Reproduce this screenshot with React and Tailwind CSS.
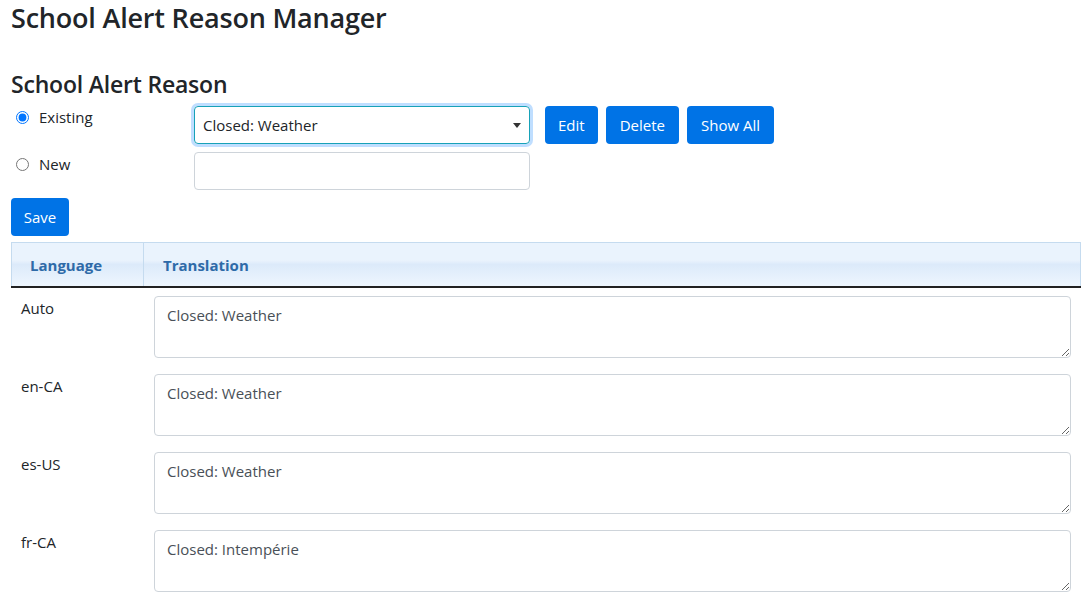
import { useState } from "react";

const rows = [
  { lang: "Auto", text: "Closed: Weather" },
  { lang: "en-CA", text: "Closed: Weather" },
  { lang: "es-US", text: "Closed: Weather" },
  { lang: "fr-CA", text: "Closed: Intempérie" },
];

export default function App() {
  const [mode, setMode] = useState("existing");

  return (
    <div className="px-[11px] pt-[2px] font-['Open_Sans',sans-serif] text-[#212529] text-[15px]">
      <h1 className="text-[27px] leading-[32px] font-semibold tracking-[-0.2px]">School Alert Reason Manager</h1>

      <h2 className="mt-[36px] text-[23px] leading-[28px] font-semibold tracking-[-0.2px]">School Alert Reason</h2>

      <div className="mt-[8px] flex items-start">
        <label className="w-[183px] flex items-center gap-[10px] pl-[5px] text-[#212529]">
          <input
            type="radio"
            name="mode"
            checked={mode === "existing"}
            onChange={() => setMode("existing")}
            className="w-[13px] h-[13px] accent-[#0075ff] m-0"
          />
          Existing
        </label>
        <div className="relative w-[336px] h-[38px] border border-[#17a2b8] rounded-[4px] shadow-[0_0_0_3px_rgba(0,123,255,0.25)] flex items-center pl-[8px]">
          <span className="text-[15px]">Closed: Weather</span>
          <span className="absolute right-[8px] top-[16px] w-0 h-0 border-l-[4px] border-r-[4px] border-t-[5px] border-l-transparent border-r-transparent border-t-[#333]" />
        </div>
        <div className="ml-[15px] flex gap-[8px]">
          <button className="h-[38px] px-[13px] rounded-[4px] bg-[#0073e6] text-white">Edit</button>
          <button className="h-[38px] px-[14px] rounded-[4px] bg-[#0073e6] text-white">Delete</button>
          <button className="h-[38px] px-[14px] rounded-[4px] bg-[#0073e6] text-white">Show All</button>
        </div>
      </div>

      <div className="mt-[8px] flex items-start">
        <label className="w-[183px] flex items-center gap-[10px] pl-[5px] pt-[1px] text-[#212529]">
          <input
            type="radio"
            name="mode"
            checked={mode === "new"}
            onChange={() => setMode("new")}
            className="w-[13px] h-[13px] accent-[#0075ff] m-0"
          />
          New
        </label>
        <input className="w-[336px] h-[38px] border border-[#ced4da] rounded-[4px] px-[8px] outline-none" />
      </div>

      <button className="mt-[8px] h-[38px] w-[58px] rounded-[4px] bg-[#0073e6] text-white">Save</button>

      <div className="mt-[6px] w-[1070px]">
        <div className="flex h-[44px] border border-[#c5dbef] border-b-0 bg-[linear-gradient(to_bottom,#eaf3fd_0%,#eaf3fd_40%,#dceafa_50%,#eef6fe_100%)] text-[#2e6aa8] font-bold text-[15px]">
          <div className="w-[132px] border-r border-[#c5dbef] flex items-center pl-[18px] pt-[2px]">Language</div>
          <div className="flex items-center pl-[19px] pt-[2px]">Translation</div>
        </div>
        <div className="h-[2px] bg-[#222]" />
        {rows.map((r) => (
          <div key={r.lang} className="flex pt-[8px] pb-[8px]">
            <div className="w-[143px] pl-[10px] pt-[2px] leading-[20px]">{r.lang}</div>
            <textarea
              defaultValue={r.text}
              className="w-[917px] h-[62px] border border-[#ced4da] rounded-[4px] px-[12px] py-[7px] text-[#495057] leading-[22px] outline-none"
            />
          </div>
        ))}
      </div>
    </div>
  );
}
